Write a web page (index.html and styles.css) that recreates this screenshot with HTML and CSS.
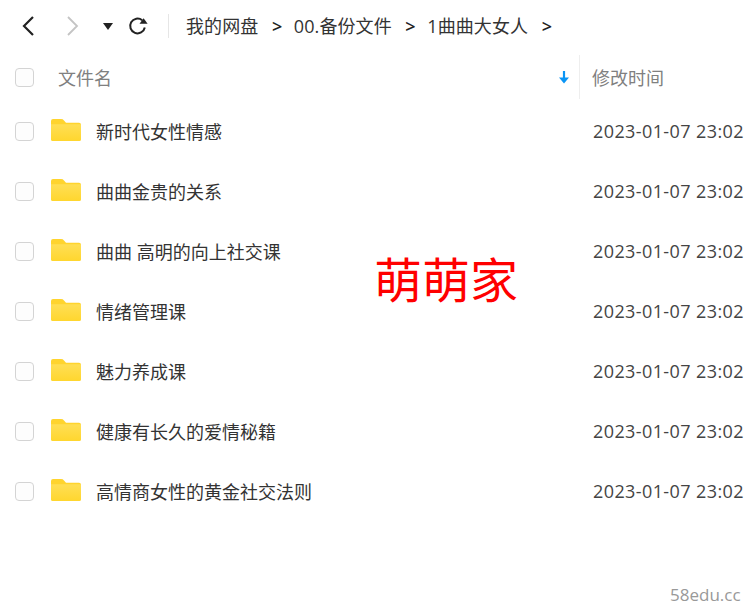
FILE: index.html
```html
<!DOCTYPE html>
<html lang="zh-CN">
<head>
<meta charset="utf-8">
<title>我的网盘</title>
<link rel="stylesheet" href="styles.css">
</head>
<body>
<svg class="defs" width="0" height="0"><defs>
  <linearGradient id="fg" x1="0" y1="0" x2="0" y2="1"><stop offset="0" stop-color="#ffdf55"/><stop offset="1" stop-color="#ffd62e"/></linearGradient>
  <symbol id="folder" viewBox="0 0 30 23" preserveAspectRatio="none"><path d="M0 2 Q0 0 2 0 H10 Q12 0 13 1.5 L15 4 H28 Q30 4 30 6 V21 Q30 23 28 23 H2 Q0 23 0 21 Z" fill="#ffd42e"/><path d="M0 5.5 H30 V21 Q30 23 28 23 H2 Q0 23 0 21 Z" fill="url(#fg)"/></symbol>
</defs></svg>
<div class="page">
  <nav class="toolbar">
    <svg class="ico back" width="16" height="22" viewBox="0 0 16 22"><path d="M13 2 L4 11 L13 20" fill="none" stroke="#222" stroke-width="2.2"/></svg>
    <svg class="ico forward" width="16" height="22" viewBox="0 0 16 22"><path d="M3 2 L12 11 L3 20" fill="none" stroke="#c4c4c4" stroke-width="1.8"/></svg>
    <svg class="ico drop" width="10" height="7" viewBox="0 0 10 7"><path d="M0 0 H10 L5 7 Z" fill="#222"/></svg>
    <svg class="ico refresh" width="20" height="20" viewBox="0 0 20 20"><path d="M16.8 11.5 A7.4 7.4 0 1 1 14.2 4.2" fill="none" stroke="#222" stroke-width="2"/><path d="M11.5 7.8 L19.6 7.8 L15.6 2.2 Z" fill="#222"/></svg>
    <span class="divider"></span>
    <div class="crumbs">
      <span>我的网盘</span><b>&gt;</b><span>00.备份文件</span><b>&gt;</b><span>1曲曲大女人</span><b>&gt;</b>
    </div>
  </nav>
  <div class="head">
    <span class="check"></span>
    <span class="head-name">文件名</span>
    <svg class="sort" width="12" height="13" viewBox="0 0 12 13"><path d="M6 0 V11" stroke="#0a95f5" stroke-width="2.2"/><path d="M1 6.5 H11 L6 12.5 Z" fill="#0a95f5"/></svg>
    <span class="head-div"></span>
    <span class="head-time">修改时间</span>
  </div>
  <ul class="list">
    <li class="row"><span class="check"></span><svg class="folder" width="30" height="22"><use href="#folder"/></svg><span class="name">新时代女性情感</span><time>2023-01-07 23:02</time></li>
    <li class="row"><span class="check"></span><svg class="folder" width="30" height="22"><use href="#folder"/></svg><span class="name">曲曲金贵的关系</span><time>2023-01-07 23:02</time></li>
    <li class="row"><span class="check"></span><svg class="folder" width="30" height="22"><use href="#folder"/></svg><span class="name">曲曲 高明的向上社交课</span><time>2023-01-07 23:02</time></li>
    <li class="row"><span class="check"></span><svg class="folder" width="30" height="22"><use href="#folder"/></svg><span class="name">情绪管理课</span><time>2023-01-07 23:02</time></li>
    <li class="row"><span class="check"></span><svg class="folder" width="30" height="22"><use href="#folder"/></svg><span class="name">魅力养成课</span><time>2023-01-07 23:02</time></li>
    <li class="row"><span class="check"></span><svg class="folder" width="30" height="22"><use href="#folder"/></svg><span class="name">健康有长久的爱情秘籍</span><time>2023-01-07 23:02</time></li>
    <li class="row"><span class="check"></span><svg class="folder" width="30" height="22"><use href="#folder"/></svg><span class="name">高情商女性的黄金社交法则</span><time>2023-01-07 23:02</time></li>
  </ul>
  <div class="mark">萌萌家</div>
  <div class="site">58edu.cc</div>
</div>
</body>
</html>
```

FILE: styles.css
```css
* { box-sizing: border-box; }
html, body { margin: 0; padding: 0; background: #fff; }
.defs { position: absolute; }
.page {
  position: relative;
  width: 754px;
  height: 615px;
  overflow: hidden;
  font-family: "Open Sans", "Noto Sans CJK SC", sans-serif;
  font-size: 18px;
  color: #333;
}
.toolbar { display: flex; align-items: center; height: 52px; padding-left: 20px; }
.ico { display: block; flex: none; }
.forward { margin-left: 29px; }
.drop { margin-left: 22px; }
.refresh { margin-left: 15px; margin-top: -1px; }
.divider { width: 1px; height: 24px; background: #e6e6e6; margin-left: 20px; }
.crumbs { display: flex; align-items: center; margin-left: 17px; line-height: 24px; color: #333; letter-spacing: 0.1px; }
.crumbs b { font-weight: 600; color: #222; margin: 0 11.5px 0 13.5px; }
.head { display: flex; align-items: center; height: 50px; padding-left: 15px; color: #808080; }
.check {
  flex: none;
  width: 19px;
  height: 19px;
  border: 1px solid #d4d4d4;
  border-radius: 4px;
  background: #fdfdfd;
}
.head-name { margin-left: 24px; width: 501px; }
.sort { flex: none; margin-left: -1px; }
.head-div { width: 1px; height: 44px; background: #eee; margin-left: 9px; }
.head-time { margin-left: 12px; }
.list { list-style: none; margin: -1px 0 0; padding: 0; }
.row { display: flex; align-items: center; height: 60px; padding-left: 15px; }
.folder { flex: none; margin-left: 17px; margin-top: -2px; }
.name { margin-left: 15px; width: 497px; flex: none; color: #333; }
time { white-space: nowrap; color: #444; letter-spacing: 0.4px; }
.mark {
  position: absolute;
  left: 374px;
  top: 244px;
  font-size: 48px;
  line-height: 66px;
  color: #f00;
  font-family: "Noto Sans CJK SC", sans-serif;
}
.site {
  position: absolute;
  left: 670px;
  top: 585px;
  font-size: 17px;
  line-height: 20px;
  color: #999;
  font-family: "Open Sans", sans-serif;
}
```
